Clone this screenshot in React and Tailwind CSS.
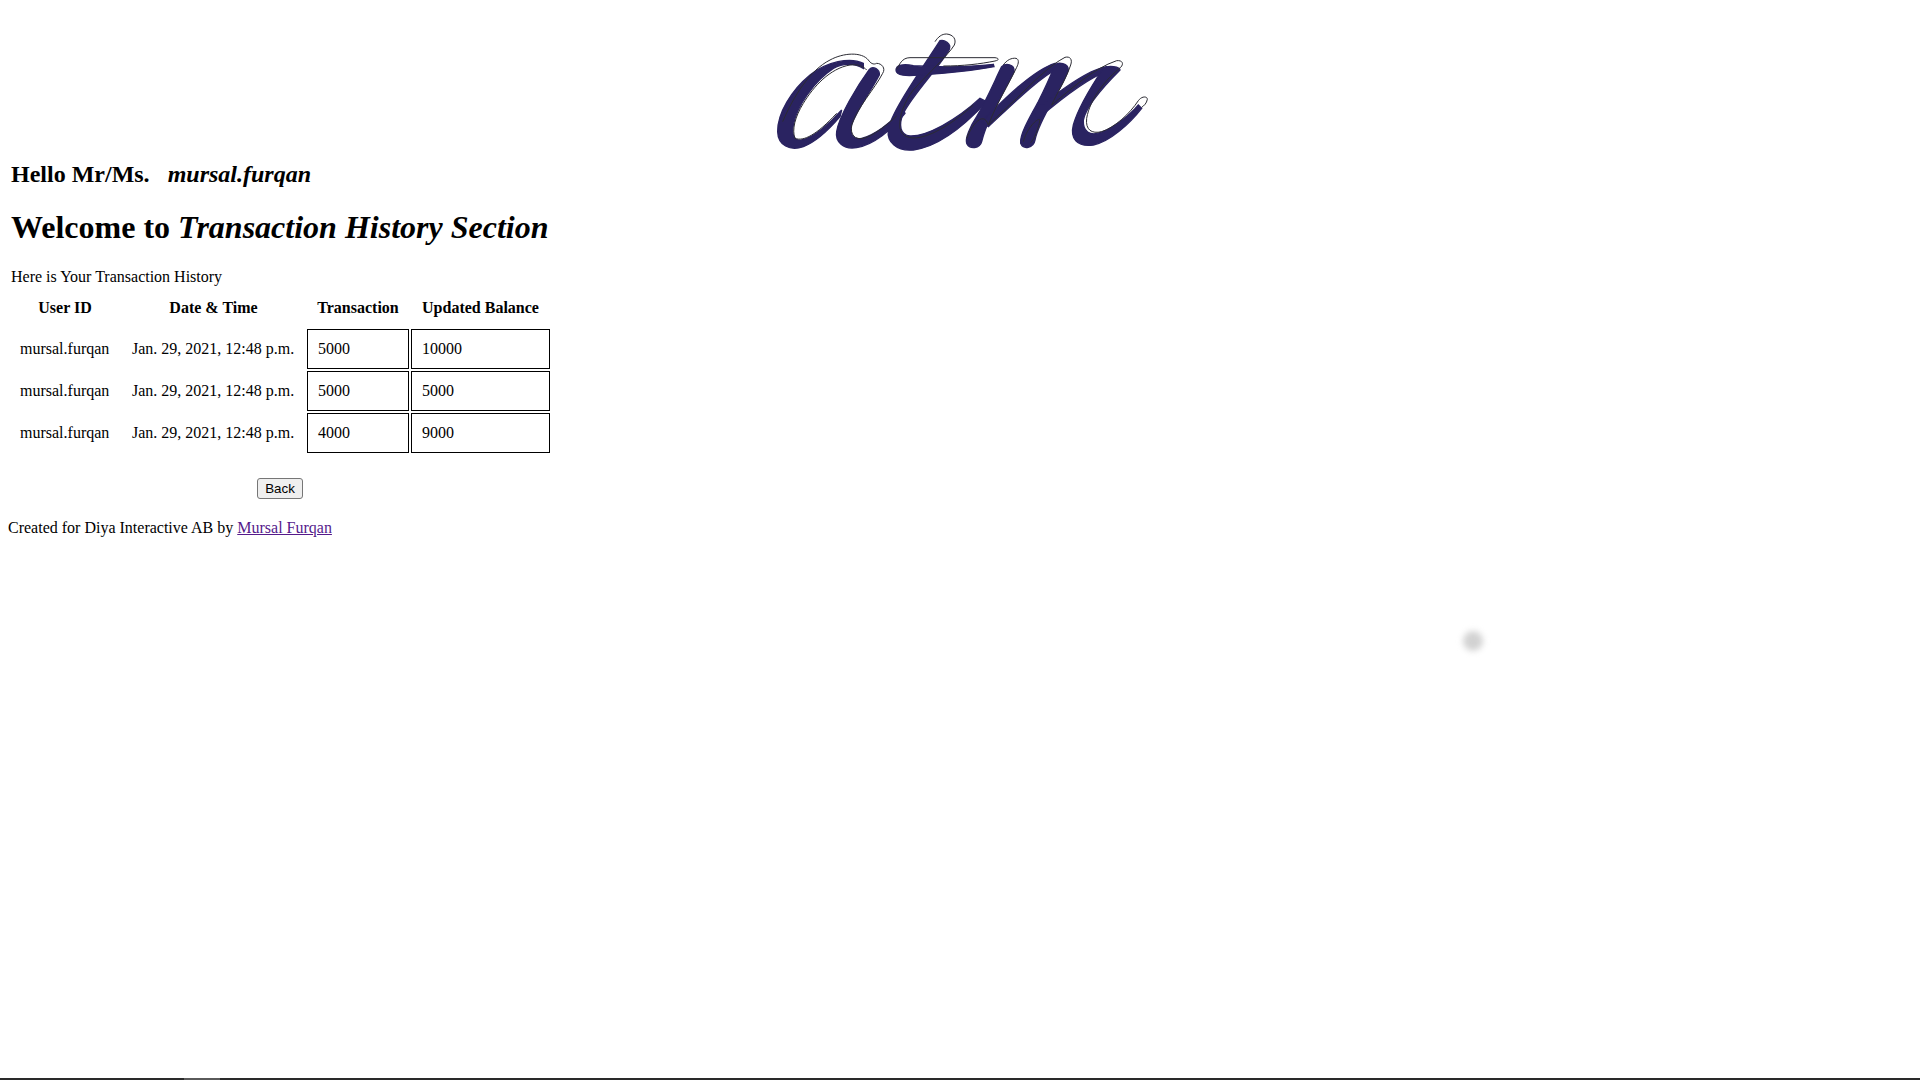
const rows = [
  { user: "mursal.furqan", date: "Jan. 29, 2021, 12:48 p.m.", amount: "5000", balance: "10000" },
  { user: "mursal.furqan", date: "Jan. 29, 2021, 12:48 p.m.", amount: "5000", balance: "5000" },
  { user: "mursal.furqan", date: "Jan. 29, 2021, 12:48 p.m.", amount: "4000", balance: "9000" },
];

// logo strokes, traced from the reference
const logoShapes = [
  "M370 160C330 140 260 155 210 195C155 240 112 310 113 365C114 405 150 425 190 410C230 395 270 355 300 320L305 300C270 340 220 385 185 390C160 395 155 370 160 345C170 290 220 215 280 175C310 158 345 160 370 175Z",
  "M388 178C400 165 420 180 418 195C395 240 350 300 335 345C328 375 340 390 365 385C400 378 450 340 490 300L495 310C455 360 400 405 350 413C310 420 285 395 290 365C297 320 350 230 388 178Z",
  "M600 92C612 88 635 100 628 118C600 170 520 250 490 310C475 345 480 375 510 378C560 380 650 330 720 265L740 275C680 340 600 410 520 420C470 425 440 395 445 360C450 310 550 170 600 92Z",
  "M468 180C468 165 490 160 520 167C600 172 700 170 760 163L762 170C700 182 620 190 540 195C500 198 468 198 468 180Z",
  "M785 170C795 160 825 160 822 185C790 250 740 330 725 395C720 415 690 420 680 400C675 385 690 350 710 320C740 270 765 210 785 170Z",
  "M725 335C790 270 880 180 945 160L955 175C900 200 810 290 745 350Z",
  "M945 165C955 155 985 160 985 180C965 240 900 320 885 390C880 415 850 420 842 400C838 375 870 320 895 275C915 235 935 190 945 165Z",
  "M880 305C950 250 1040 180 1100 170L1100 185C1040 205 960 270 895 325Z",
  "M1090 175C1105 165 1140 170 1140 180C1110 210 1040 280 1030 330C1028 365 1050 378 1080 368C1120 355 1170 315 1195 285L1205 295C1170 340 1110 395 1060 405C1010 412 990 385 1000 345C1015 290 1060 220 1090 175Z",
];

// thin contour that sits up and to the right of the fill
const logoOutlines = [
  "M128 335C160 260 210 180 270 150C310 128 365 125 385 150C392 160 400 165 410 160C425 160 438 175 428 190C405 235 350 295 335 345C330 375 345 390 370 385C400 378 440 345 470 318",
  "M165 385C155 360 165 320 190 280C220 230 270 175 330 165C350 162 370 168 380 180M165 385C190 395 230 375 290 310",
  "M585 95C595 80 605 72 620 72C640 74 650 88 643 105C625 135 560 195 520 240C495 272 475 320 480 355C485 380 510 388 540 382C590 372 650 330 700 285",
  "M470 178C478 165 485 143 510 143L765 143C778 145 778 150 765 153C720 162 670 168 610 168",
  "M790 165C800 150 815 143 828 145C838 148 836 160 830 172C805 225 770 280 745 345L830 265C870 225 930 165 975 142C990 138 998 148 992 165C975 215 950 250 935 285C990 240 1060 175 1130 152C1148 150 1152 162 1142 172C1100 205 1050 265 1040 325C1036 360 1055 372 1085 365C1125 352 1170 310 1195 272C1205 258 1222 258 1222 268C1220 280 1212 287 1205 292",
  "M680 385C695 345 730 300 745 345M850 395C860 355 895 320 900 330C895 355 885 385 872 398",
];

function Logo() {
  return (
    <svg width="440" height="150" viewBox="0 0 1320 450" fill="none">
      {logoShapes.map((d, i) => (
        <path key={i} d={d} fill="#2a2361" stroke="#2a2361" strokeWidth="4" />
      ))}
      {logoOutlines.map((d, i) => (
        <path key={i} d={d} stroke="#2b2b33" strokeWidth="3" />
      ))}
    </svg>
  );
}

export default function App() {
  return (
    <div className="relative flex min-h-screen flex-col justify-between bg-white font-['Liberation_Serif',serif] text-base leading-[18px] text-black">
      <div>
        <div className="flex justify-center pt-[10px]">
          <Logo />
        </div>

        <div className="px-2">
          <h2 className="pl-[3px] text-2xl leading-[28px] font-bold">
            Hello Mr/Ms.{"\u00a0\u00a0\u00a0"}<em>mursal.furqan</em>
          </h2>
          <h1 className="mt-[21px] pl-[3px] text-[32px] leading-[37px] font-bold">
            Welcome to <em>Transaction History Section</em>
          </h1>
          <p className="mt-[22px] pl-[3px]">Here is Your Transaction History</p>

          <table className="mt-px border-separate border-spacing-[2px]">
            <thead>
              <tr>
                <th className="w-[110px] p-[10px] font-bold">User ID</th>
                <th className="w-[183px] p-[10px] font-bold">Date &amp; Time</th>
                <th className="w-[102px] p-[10px] font-bold">Transaction</th>
                <th className="w-[139px] p-[10px] font-bold">Updated Balance</th>
              </tr>
            </thead>
            <tbody>
              {rows.map((row, i) => (
                <tr key={i}>
                  <td className="p-[10px]">{row.user}</td>
                  <td className="p-[10px]">{row.date}</td>
                  <td className="border border-black p-[10px]">{row.amount}</td>
                  <td className="border border-black p-[10px]">{row.balance}</td>
                </tr>
              ))}
            </tbody>
          </table>

          <div className="mt-[23px] flex w-[544px] justify-center">
            <button className="rounded-[3px] border border-[#767676] bg-[#efefef] px-[7px] py-[2px] font-['Liberation_Sans',sans-serif] text-[13.33px] leading-[15px]">
              Back
            </button>
          </div>

          <p className="mt-[20px]">
            Created for Diya Interactive AB by{" "}
            <a href="#" className="text-[#551a8b] underline">Mursal Furqan</a>
          </p>
        </div>
      </div>

      {/* cursor highlight left on the page */}
      <div className="absolute top-[631px] left-[1463px] h-5 w-5 rounded-full bg-[#d2d2d2] blur-[3px]" />

      <div className="flex h-[2px] bg-[#2a2a2a]">
        <div className="ml-[184px] w-9 bg-[#5a5a5a]" />
      </div>
    </div>
  );
}
